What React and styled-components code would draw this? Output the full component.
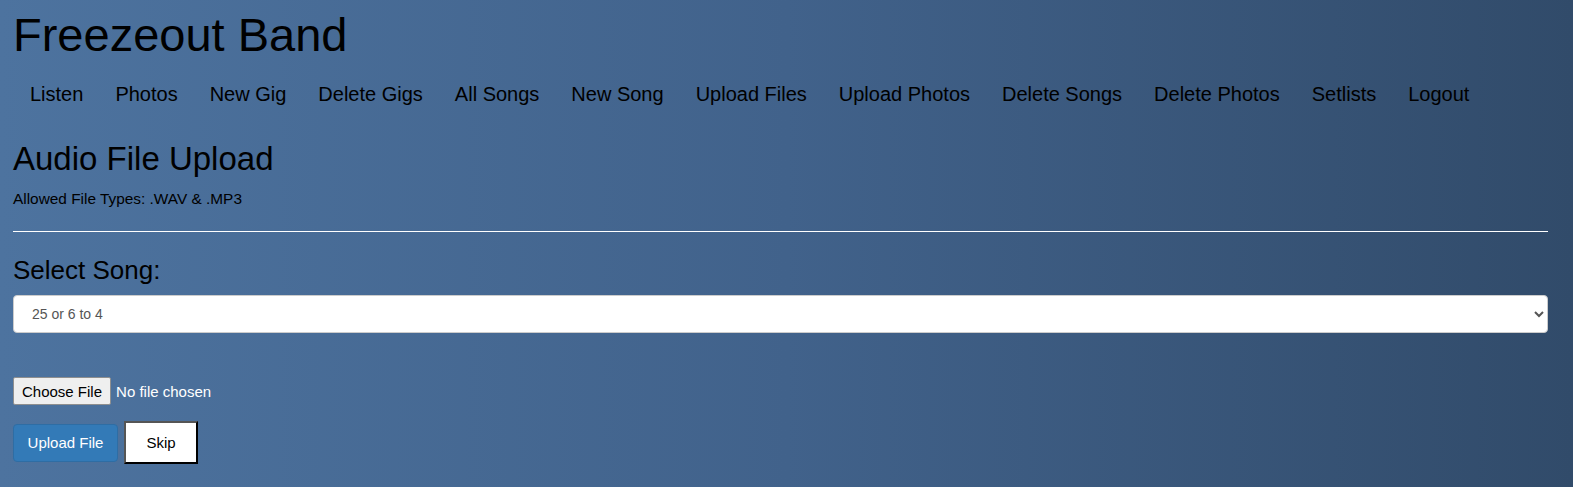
import React from "react";
import styled, { createGlobalStyle } from "styled-components";

const Global = createGlobalStyle`
  html {
    margin: 0;
    padding: 0;
    min-height: 100%;
    background: linear-gradient(to right, #4d739f 0%, #41628b 50%, #314b6a 100%);
  }
  body {
    margin: 0;
    padding: 0;
    font-family: "Liberation Sans", Arial, sans-serif;
    color: #000;
  }
  * { box-sizing: border-box; }
`;

const Page = styled.div`
  padding: 0 25px 0 13px;
`;

const Title = styled.h1`
  margin: 0;
  padding-top: 8px;
  font-size: 47px;
  font-weight: 400;
  line-height: 54px;
`;

const Nav = styled.nav`
  display: flex;
  margin-top: 20px;
  margin-left: 1px;
`;

const NavLink = styled.a`
  display: block;
  padding: 0 16px;
  font-size: 20px;
  line-height: 24px;
  color: #000;
  text-decoration: none;
  cursor: pointer;
`;

const Heading = styled.h2`
  margin: 33px 0 0 0;
  font-size: 33px;
  font-weight: 400;
  line-height: 40px;
`;

const Note = styled.p`
  margin: 12px 0 0 0;
  font-size: 15.4px;
  line-height: 16px;
`;

const Rule = styled.hr`
  margin: 24px 0 0 0;
  border: 0;
  border-top: 1px solid #fff;
  height: 0;
`;

const Label = styled.label`
  display: block;
  margin-top: 24px;
  font-size: 26px;
  line-height: 28px;
`;

const Select = styled.select`
  display: block;
  width: 100%;
  margin-top: 11px;
  height: 38px;
  padding: 0 14px;
  font-family: "Liberation Sans", Arial, sans-serif;
  font-size: 14px;
  color: #555;
  background: #fff;
  border: 1px solid #ccc;
  border-radius: 4px;
  outline: none;
`;

const FileInput = styled.input`
  display: block;
  margin-top: 44px;
  font-family: "Liberation Sans", Arial, sans-serif;
  font-size: 15px;
  color: #fff;
  height: 28px;
  &::file-selector-button {
    font-family: "Liberation Sans", Arial, sans-serif;
    font-size: 15px;
    color: #000;
    background: #efefef;
    border: 1px solid #8f8f8f;
    border-radius: 2px;
    padding: 3px 8px;
    height: 28px;
    margin-right: 5px;
  }
`;

const Actions = styled.div`
  display: flex;
  align-items: center;
  gap: 6px;
  margin-top: 16px;
`;

const PrimaryButton = styled.button`
  height: 38px;
  width: 105px;
  padding: 0;
  font-family: "Liberation Sans", Arial, sans-serif;
  font-size: 15px;
  color: #fff;
  background: #337ab7;
  border: 1px solid #2e6da4;
  border-radius: 4px;
  cursor: pointer;
`;

const SkipButton = styled.button`
  width: 74px;
  height: 43px;
  font-family: "Liberation Sans", Arial, sans-serif;
  font-size: 15px;
  color: #000;
  background: #fff;
  border: 2px solid;
  border-color: #555 #000 #000 #555;
  border-radius: 0;
  cursor: pointer;
`;

const links = [
  "Listen", "Photos", "New Gig", "Delete Gigs", "All Songs", "New Song",
  "Upload Files", "Upload Photos", "Delete Songs", "Delete Photos", "Setlists", "Logout",
];

export default function App() {
  return (
    <>
      <Global />
      <Page>
        <Title>Freezeout Band</Title>
        <Nav>
          {links.map((l) => (
            <NavLink key={l}>{l}</NavLink>
          ))}
        </Nav>
        <Heading>Audio File Upload</Heading>
        <Note>Allowed File Types: .WAV &amp; .MP3</Note>
        <Rule />
        <Label htmlFor="song">Select Song:</Label>
        <Select id="song" defaultValue="25">
          <option value="25">25 or 6 to 4</option>
        </Select>
        <FileInput type="file" />
        <Actions>
          <PrimaryButton>Upload File</PrimaryButton>
          <SkipButton>Skip</SkipButton>
        </Actions>
      </Page>
    </>
  );
}
